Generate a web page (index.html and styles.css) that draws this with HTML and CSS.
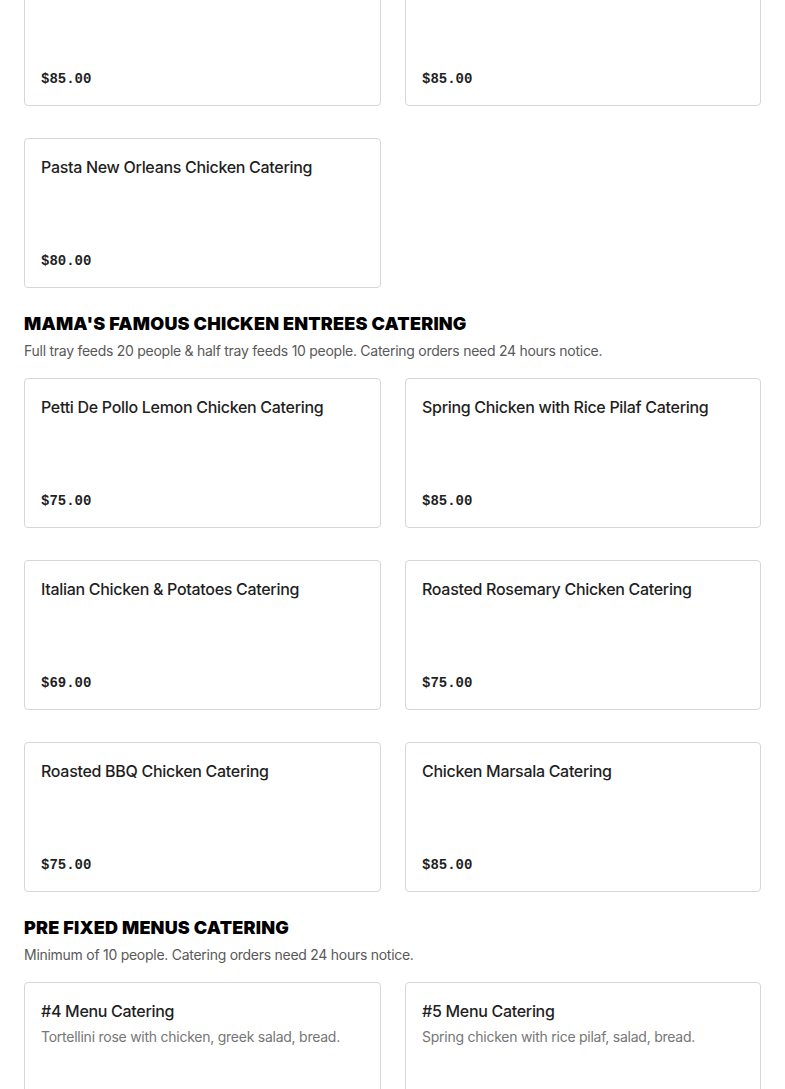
FILE: index.html
```html
<!DOCTYPE html>
<html lang="en">
<head>
<meta charset="utf-8">
<title>Catering Menu</title>
<link rel="stylesheet" href="styles.css">
</head>
<body>
<main class="menu">
  <section class="section section-first">
    <div class="grid">
      <div class="card"><h3 class="card-title">&nbsp;</h3><p class="price">$85.00</p></div>
      <div class="card"><h3 class="card-title">&nbsp;</h3><p class="price">$85.00</p></div>
      <div class="card"><h3 class="card-title">Pasta New Orleans Chicken Catering</h3><p class="price">$80.00</p></div>
    </div>
  </section>

  <section class="section">
    <h2 class="section-title">MAMA'S FAMOUS CHICKEN ENTREES CATERING</h2>
    <p class="section-desc">Full tray feeds 20 people &amp; half tray feeds 10 people. Catering orders need 24 hours notice.</p>
    <div class="grid">
      <div class="card"><h3 class="card-title">Petti De Pollo Lemon Chicken Catering</h3><p class="price">$75.00</p></div>
      <div class="card"><h3 class="card-title">Spring Chicken with Rice Pilaf Catering</h3><p class="price">$85.00</p></div>
      <div class="card"><h3 class="card-title">Italian Chicken &amp; Potatoes Catering</h3><p class="price">$69.00</p></div>
      <div class="card"><h3 class="card-title">Roasted Rosemary Chicken Catering</h3><p class="price">$75.00</p></div>
      <div class="card"><h3 class="card-title">Roasted BBQ Chicken Catering</h3><p class="price">$75.00</p></div>
      <div class="card"><h3 class="card-title">Chicken Marsala Catering</h3><p class="price">$85.00</p></div>
    </div>
  </section>

  <section class="section">
    <h2 class="section-title">PRE FIXED MENUS CATERING</h2>
    <p class="section-desc">Minimum of 10 people. Catering orders need 24 hours notice.</p>
    <div class="grid">
      <div class="card"><h3 class="card-title">#4 Menu Catering</h3><p class="card-desc">Tortellini rose with chicken, greek salad, bread.</p></div>
      <div class="card"><h3 class="card-title">#5 Menu Catering</h3><p class="card-desc">Spring chicken with rice pilaf, salad, bread.</p></div>
    </div>
  </section>
</main>
</body>
</html>
```
FILE: styles.css
```css
* { box-sizing: border-box; }
html, body { margin: 0; padding: 0; background: #fff; }
body { font-family: "Inter", "Liberation Sans", sans-serif; color: #1f1f1f; }

.menu {
  width: 737px;
  margin: -44px 0 0 24px;
}

.section { margin-top: 24px; }
.section-first { margin-top: 0; }

.section-title {
  margin: 0;
  font-family: "Inter", "Liberation Sans", sans-serif;
  font-weight: 900;
  font-size: 18px;
  line-height: 24px;
  color: #000;
  letter-spacing: 0.2px;
}

.section-desc {
  margin: 5px 0 17px;
  font-size: 14px;
  line-height: 20px;
  letter-spacing: -0.27px;
  color: #595959;
}

.grid {
  display: grid;
  grid-template-columns: 357px 356px;
  column-gap: 24px;
  row-gap: 32px;
}

.card {
  display: flex;
  flex-direction: column;
  justify-content: space-between;
  height: 150px;
  padding: 16px;
  border: 1px solid #d6d6d6;
  border-radius: 4px;
  background: #fff;
}

.card-title {
  margin: 0;
  font-size: 16px;
  line-height: 24px;
  font-weight: 500;
  letter-spacing: -0.3px;
  color: #1f1f1f;
}

.price {
  margin: 0;
  font-family: "Liberation Mono", "DejaVu Sans Mono", monospace;
  font-size: 14px;
  line-height: 20px;
  font-weight: 700;
  color: #1f1f1f;
}

.card-desc {
  margin: 4px 0 auto;
  font-size: 14px;
  line-height: 20px;
  letter-spacing: -0.25px;
  color: #767676;
}
```
